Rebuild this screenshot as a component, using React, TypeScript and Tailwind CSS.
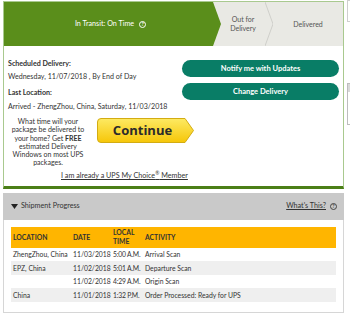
import React from "react";

function HelpDot({ light }: { light?: boolean }) {
  return (
    <span
      className={`inline-flex items-center justify-center w-[7px] h-[7px] rounded-full border text-[5px] leading-none font-bold ${
        light ? "border-white text-white" : "border-[#444] text-[#444]"
      }`}
    >
      ?
    </span>
  );
}

const rows = [
  { loc: "ZhengZhou, China", date: "11/03/2018", time: "5:00 A.M.", act: "Arrival Scan" },
  { loc: "EPZ, China", date: "11/02/2018", time: "5:01 A.M.", act: "Departure Scan" },
  { loc: "", date: "11/02/2018", time: "4:29 A.M.", act: "Origin Scan" },
  { loc: "China", date: "11/01/2018", time: "1:32 P.M.", act: "Order Processed: Ready for UPS" },
];

export default function App() {
  return (
    <div className="w-[350px] h-[321px] bg-white overflow-hidden flex font-['Lato',sans-serif] text-[#333]">
      <div className="ml-[3px] w-[341px] pt-[1px] flex flex-col shrink-0">
        {/* status card */}
        <div className="border border-[#a9c98f] border-b-[3px] border-b-[#4b7f17]">
          <div className="h-[44px] flex bg-[#e9e9e4]">
            <div className="w-[209px] bg-[#5a8e1b] flex items-center justify-center gap-[5px] pl-[4px] text-white text-[7.2px]">
              <span>In Transit: On Time</span>
              <HelpDot light />
            </div>
            <svg width="8" height="44" viewBox="0 0 8 44" className="shrink-0">
              <polygon points="0,0 8,22 0,44" fill="#5a8e1b" />
            </svg>
            <div className="w-[44px] flex items-center justify-center text-center text-[7px] leading-[9px] text-[#555]">
              Out for
              <br />
              Delivery
            </div>
            <svg width="8" height="44" viewBox="0 0 8 44" className="shrink-0">
              <polyline points="0,0 8,22 0,44" fill="none" stroke="#cfcfca" strokeWidth="1" />
            </svg>
            <div className="flex-1 flex items-center justify-center text-[7px] text-[#555]">Delivered</div>
          </div>

          <div className="px-[4px] pb-[5px]">
            <div className="flex items-start">
              <div className="flex-1 text-[7.1px] leading-[10px]">
                <div className="mt-[13px] font-bold">Scheduled Delivery:</div>
                <div className="mt-[3px]">Wednesday, 11/07/2018 , By End of Day</div>
                <div className="mt-[6px] font-bold">Last Location:</div>
                <div className="mt-[4px]">Arrived - ZhengZhou, China, Saturday, 11/03/2018</div>
              </div>
              <div className="w-[157px] mt-[14px] flex flex-col gap-[6px]">
                <button className="h-[17px] rounded-full bg-[#097d66] text-white text-[7.5px] font-bold">
                  Notify me with Updates
                </button>
                <button className="h-[17px] rounded-full bg-[#097d66] text-white text-[7.5px] font-bold">
                  Change Delivery
                </button>
              </div>
            </div>

            <div className="flex items-start mt-[5px]">
              <div className="w-[78px] ml-[1px] text-center text-[7px] leading-[8.3px] whitespace-nowrap">
                What time will your
                <br />
                package be delivered to
                <br />
                your home? Get <b>FREE</b>
                <br />
                estimated Delivery
                <br />
                Windows on most UPS
                <br />
                packages.
              </div>
              <button className="relative ml-[10px] mt-[1px] w-[97px] h-[25px] flex items-center justify-center pr-[6px]">
                <svg width="97" height="25" viewBox="0 0 97 25" className="absolute inset-0">
                  <defs>
                    <linearGradient id="cg" x1="0" y1="0" x2="0" y2="1">
                      <stop offset="0" stopColor="#fdea63" />
                      <stop offset="1" stopColor="#f6c608" />
                    </linearGradient>
                  </defs>
                  <path
                    d="M4 0.5 H88 L96.5 12.5 L88 24.5 H4 Q0.5 24.5 0.5 21 V4 Q0.5 0.5 4 0.5 Z"
                    fill="url(#cg)"
                    stroke="#d3ac12"
                    strokeWidth="1"
                  />
                </svg>
                <span className="relative text-[13px] font-bold text-[#2b2b2b] font-['Open_Sans',sans-serif]">Continue</span>
              </button>
            </div>

            <div className="mt-[4px] pl-[53px] text-[7.2px] leading-[10px] underline">
              I am already a UPS My Choice<sup className="text-[5px]">®</sup> Member
            </div>
          </div>
        </div>

        {/* shipment progress */}
        <div className="mt-[4px] h-[27px] bg-[#c9c9c9] flex items-center pl-[8px] pr-[7px] text-[7.2px]">
          <svg width="7" height="5" viewBox="0 0 7 5" className="mr-[3px]">
            <polygon points="0,0 7,0 3.5,5" fill="#222" />
          </svg>
          <span>Shipment Progress</span>
          <span className="ml-auto underline mr-[4px]">What's This?</span>
          <HelpDot />
        </div>
        <div className="h-[93px] border border-t-0 border-[#d6d6d6] px-[7px] pt-[7px] text-[6.8px] whitespace-nowrap">
          <div className="h-[21px] bg-[#ffb500] flex items-center font-bold uppercase leading-[9px]">
            <div className="w-[60px] pl-[2px]">Location</div>
            <div className="w-[40px] pl-[2px]">Date</div>
            <div className="w-[32px] pl-[2px]">
              Local
              <br />
              Time
            </div>
            <div className="flex-1 pl-[2px]">Activity</div>
          </div>
          {rows.map((r, i) => (
            <div key={i} className={`h-[13.5px] flex items-center ${i % 2 === 1 ? "bg-[#efefef]" : ""}`}>
              <div className="w-[60px] pl-[2px]">{r.loc}</div>
              <div className="w-[40px] pl-[2px]">{r.date}</div>
              <div className="w-[32px] pl-[2px] tracking-[-0.2px]">{r.time}</div>
              <div className="flex-1 pl-[2px]">{r.act}</div>
            </div>
          ))}
        </div>
      </div>

      {/* clipped neighbour column */}
      <div className="ml-[3px] w-[10px] shrink-0 flex flex-col">
        <div className="h-[22px] border border-r-0 border-[#cfcfcf]" />
        <div className="mt-[61px] h-[42px] border border-r-0 border-[#bdbdbd] bg-white">
          <div className="h-[8px] bg-[#d9d9d9]" />
        </div>
      </div>
    </div>
  );
}
